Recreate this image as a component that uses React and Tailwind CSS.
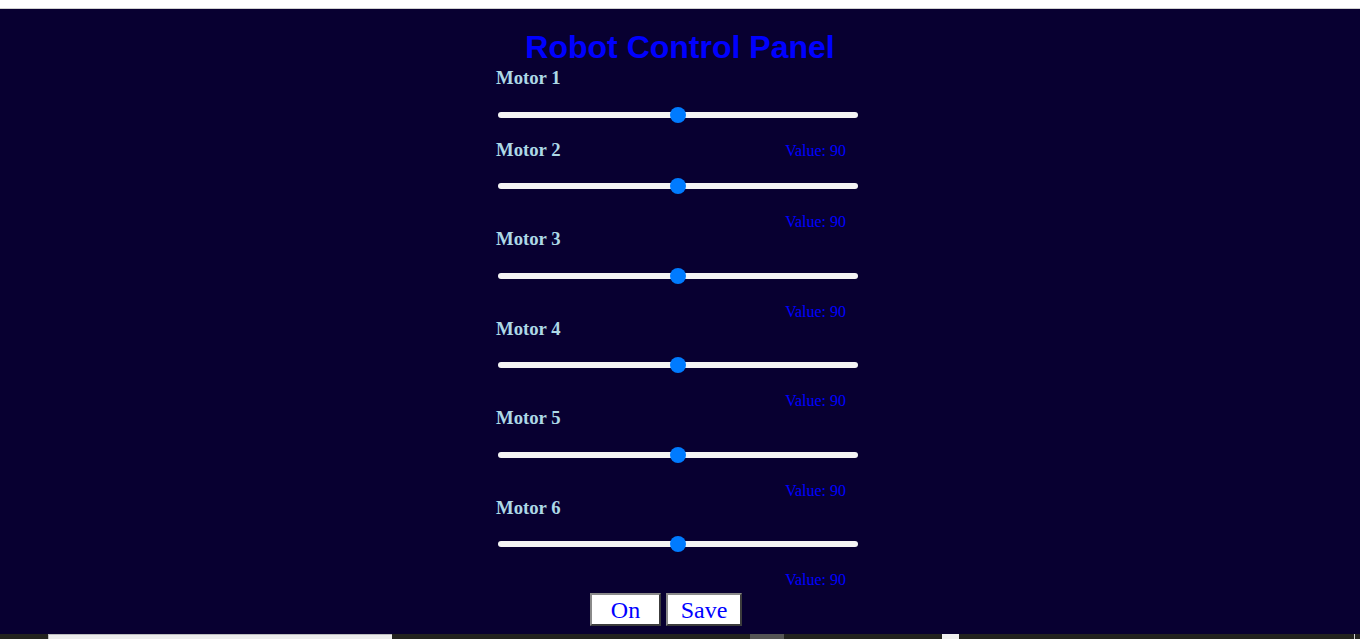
const motors = [1, 2, 3, 4, 5, 6];

function Slider() {
  return (
    <div className="h-4 flex items-center ml-[2px] w-[360px]">
      <div className="relative w-full h-[6px] rounded-full bg-[#f4f4f4]">
        <div className="absolute left-[172px] -top-[5px] w-4 h-4 rounded-full bg-[#007bff]" />
      </div>
    </div>
  );
}

function Label({ children }) {
  return (
    <div className="text-[18.72px] leading-[22px] font-bold text-[#add8e6]">{children}</div>
  );
}

function Value() {
  return <div className="text-[16px] leading-[19px] text-[#0000ff] mr-[18px]">Value: 90</div>;
}

export default function App() {
  return (
    <div className="h-[639px] flex flex-col overflow-hidden" style={{ fontFamily: '"Liberation Serif", "Times New Roman", serif' }}>
      <div className="h-[9px] bg-white border-b border-[#d0d0d0]" />
      <div className="flex-1 bg-[#080031] flex justify-center">
        <div className="w-[368px] flex flex-col">
          <h1
            className="text-[32px] leading-[37px] font-bold text-[#0000ff] text-center mt-[20px]"
            style={{ fontFamily: '"Liberation Sans", Arial, sans-serif' }}
          >
            Robot Control Panel
          </h1>
          <div className="mt-[1px]">
            <Label>Motor 1</Label>
          </div>
          <div className="mt-[18px]">
            <Slider />
          </div>
          <div className="flex justify-between items-center mt-[16px]">
            <Label>Motor 2</Label>
            <Value />
          </div>
          {motors.slice(1).map((m) => (
            <div key={m} className="flex flex-col">
              <div className={m === 2 ? "mt-[17px]" : "mt-[17.5px]"}>
                <Slider />
              </div>
              <div className="flex justify-end mt-[18px]">
                <Value />
              </div>
              {m < 6 && (
                <div className="mt-[-3px]">
                  <Label>Motor {m + 1}</Label>
                </div>
              )}
            </div>
          ))}
          <div className="flex gap-[5px] pl-[94px] mt-[4px]">
            <button className="w-[71px] h-[33px] bg-white text-[24px] leading-none text-[#0000ff] border-2 border-t-[#8a8a8a] border-l-[#8a8a8a] border-b-[#3c3c3c] border-r-[#3c3c3c]">
              On
            </button>
            <button className="w-[76px] h-[33px] bg-white text-[24px] leading-none text-[#0000ff] border-2 border-t-[#8a8a8a] border-l-[#8a8a8a] border-b-[#3c3c3c] border-r-[#3c3c3c]">
              Save
            </button>
          </div>
        </div>
      </div>
      <div className="h-[5px] bg-[#23231f] flex">
        <div className="ml-[48px] w-[344px] bg-[#ececec] border-t border-l border-[#bdbdbd]" />
        <div className="ml-[358px] w-[34px] bg-[#555555]" />
        <div className="ml-[158px] w-[17px] bg-[#f0f0f0]" />
        <div className="ml-auto mr-[5px] w-px bg-[#cfcfcf]" />
      </div>
    </div>
  );
}
